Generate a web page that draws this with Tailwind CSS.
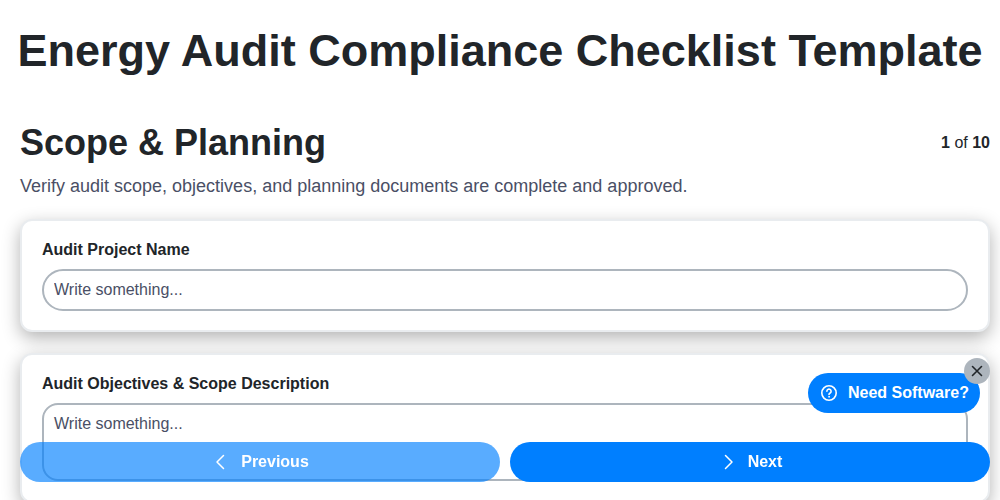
<!DOCTYPE html>
<html lang="en">
<head>
  <meta charset="UTF-8" />
  <title>Energy Audit Compliance Checklist Template</title>
  <script src="https://cdn.jsdelivr.net/npm/@tailwindcss/browser@4"></script>
</head>
<body class="bg-white text-[#212529] font-['Liberation_Sans',Arial,sans-serif] h-[500px] overflow-hidden">

  <div class="px-[10px] pt-[21px]">
    <h1 class="text-[45px] leading-[60px] font-bold text-center whitespace-nowrap">Energy Audit Compliance Checklist Template</h1>
  </div>

  <main class="pl-[20px] pr-[10px] pt-[40px]">
    <!-- Step header -->
    <div class="flex justify-between items-start">
      <h2 class="text-[36px] leading-[44px] font-bold">Scope &amp; Planning</h2>
      <div class="text-[16px] leading-[20px] pt-[12px]"><b>1</b> of <b>10</b></div>
    </div>
    <p class="text-[18px] leading-[24px] text-[#4a4f65] mt-[9px] mb-[21px]">Verify audit scope, objectives, and planning documents are complete and approved.</p>

    <!-- Cards -->
    <section class="bg-white border-2 border-[#e9ecef] rounded-[12px] shadow-[0_6px_18px_rgba(0,0,0,0.3)] px-[20px] pt-[19px] pb-[19px] mb-[21px]">
      <label class="block text-[16px] leading-[20px] font-bold mb-[9px]">Audit Project Name</label>
      <input type="text" placeholder="Write something..." class="block w-full h-[42px] px-[10px] text-[16px] border-2 border-[#adb5bd] rounded-[21px] outline-none placeholder:text-[#4a4f65]" />
    </section>

    <section class="bg-white border-2 border-[#e9ecef] rounded-[12px] shadow-[0_6px_18px_rgba(0,0,0,0.3)] px-[20px] pt-[19px] pb-[20px]">
      <label class="block text-[16px] leading-[20px] font-bold mb-[9px]">Audit Objectives &amp; Scope Description</label>
      <textarea placeholder="Write something..." class="block w-full h-[78px] px-[10px] py-[7px] text-[16px] leading-[24px] border-2 border-[#adb5bd] rounded-[16px] outline-none resize-none placeholder:text-[#4a4f65]"></textarea>
    </section>
  </main>

  <!-- Bottom nav -->
  <div class="fixed left-[20px] right-[10px] bottom-[18px] flex gap-[10px]">
    <button class="flex-1 h-[40px] rounded-[20px] bg-[#007fff]/65 text-white font-bold text-[16px] flex items-center justify-center gap-[14px]">
      <svg width="16" height="16" viewBox="0 0 16 16" fill="none" stroke="currentColor" stroke-width="1.5" stroke-linecap="round" stroke-linejoin="round"><path d="M12.5 1.5 6 8l6.5 6.5" /></svg>
      Previous
    </button>
    <button class="flex-1 h-[40px] rounded-[20px] bg-[#007fff] text-white font-bold text-[16px] flex items-center justify-center gap-[14px]">
      <svg width="16" height="16" viewBox="0 0 16 16" fill="none" stroke="currentColor" stroke-width="1.5" stroke-linecap="round" stroke-linejoin="round"><path d="M7.5 1.5 14 8l-6.500 6.500" /></svg>
      Next
    </button>
  </div>

  <!-- Floating software button -->
  <div class="fixed left-[808px] top-[373px] w-[172px] h-[40px] rounded-[20px] bg-[#007fff] text-white font-bold text-[16px] flex items-center pl-[13px] gap-[11px]">
    <svg width="16" height="16" viewBox="0 0 16 16" fill="none" stroke="currentColor" stroke-width="1.6" stroke-linecap="round"><circle cx="8" cy="8" r="7.2" /><path d="M5.9 6.2a2.1 2.1 0 1 1 3.2 1.8C8.4 8.4 8 8.8 8 9.5" /><circle cx="8" cy="11.8" r="0.5" fill="currentColor" stroke-width="0.8" /></svg>
    <span class="whitespace-nowrap">Need Software?</span>
  </div>
  <div class="fixed left-[964px] top-[358px] w-[26px] h-[26px] rounded-full bg-[#adb5bd] text-[#212529] flex items-center justify-center">
    <svg width="12" height="12" viewBox="0 0 12 12" fill="none" stroke="currentColor" stroke-width="1.6" stroke-linecap="round"><path d="M1.5 1.5l9 9M10.5 1.5l-9 9" /></svg>
  </div>

</body>
</html>
